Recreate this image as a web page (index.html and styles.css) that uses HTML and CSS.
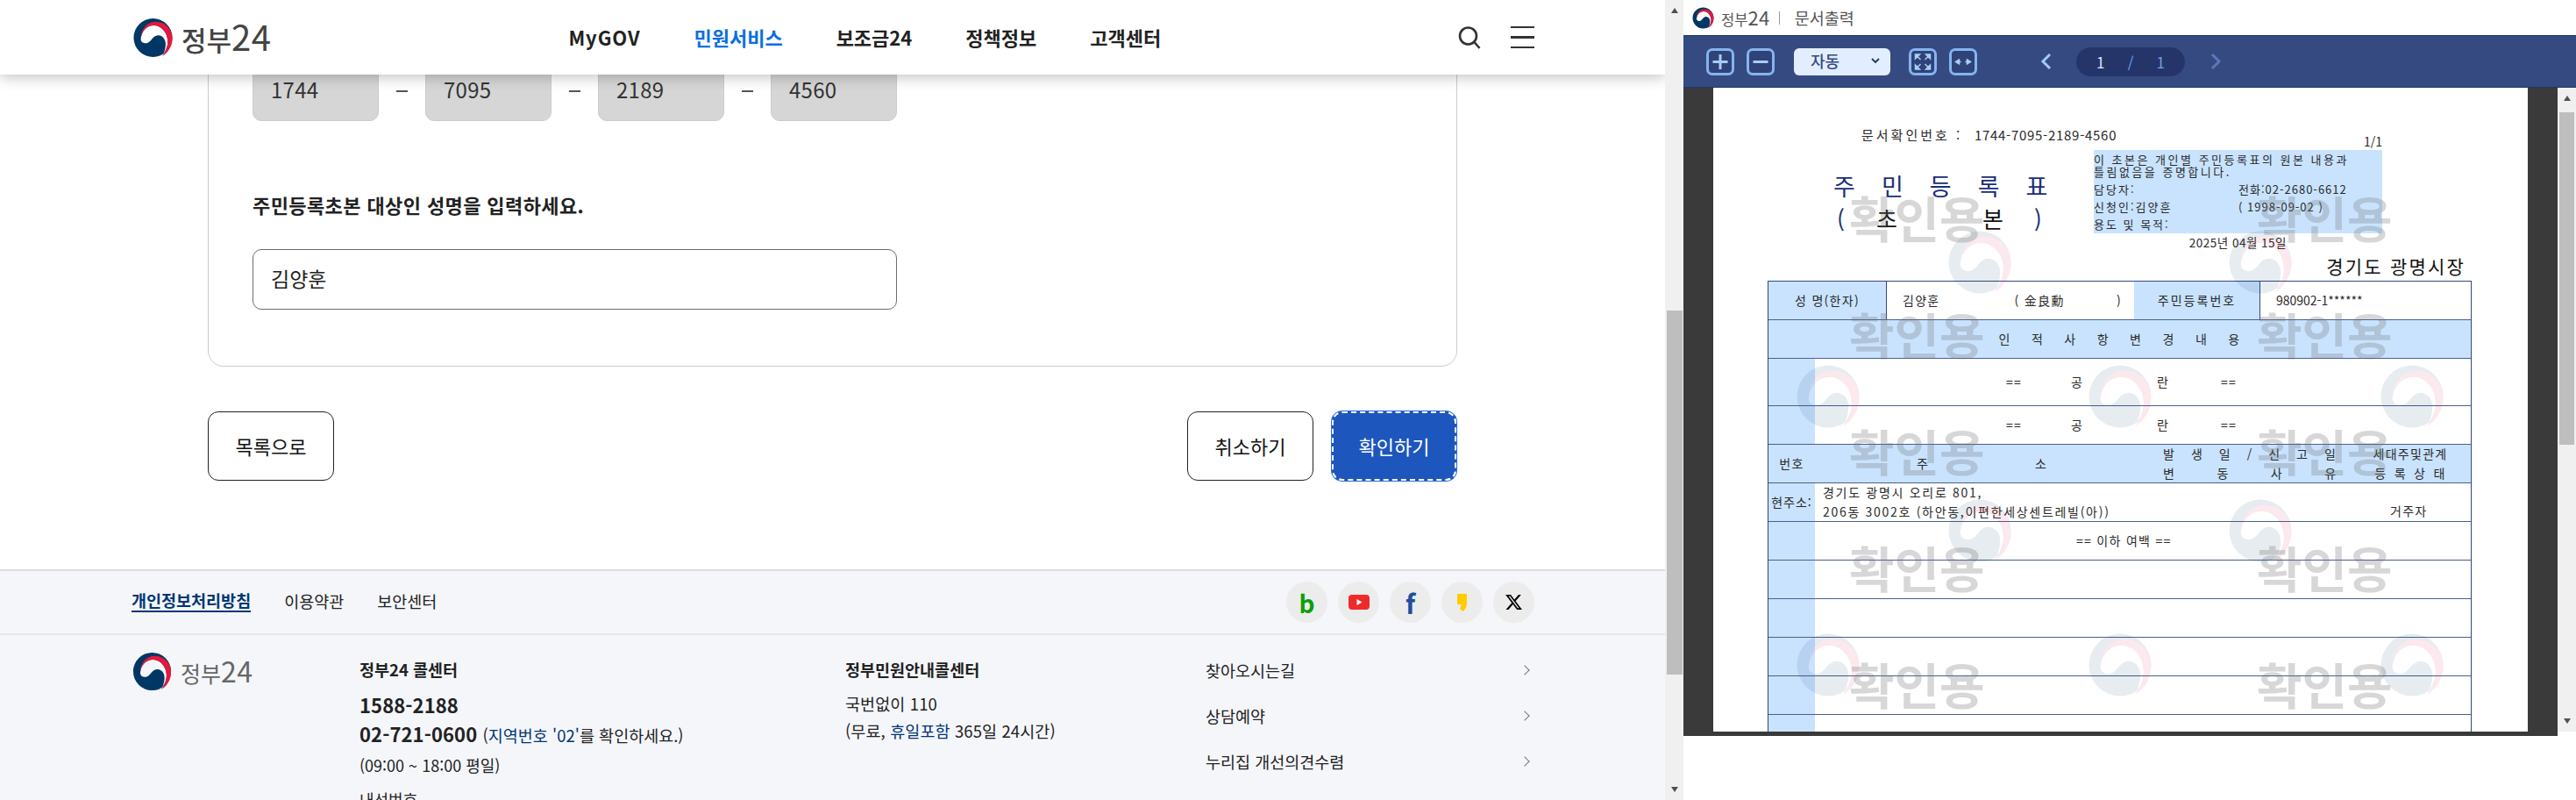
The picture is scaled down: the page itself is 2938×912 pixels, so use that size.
FILE: index.html

```html
<!DOCTYPE html>
<html lang="ko">
<head>
  <meta charset="UTF-8" />
  <title>정부24 문서출력</title>
  <link rel="stylesheet" href="styles.css">
</head>
<body>
  <svg class="defs" width="0" height="0">
    <symbol id="emblem" viewBox="0 0 48 48">
      <path fill="#003764" fill-rule="evenodd" d="M24 1a23 23 0 1 0 0 46a23 23 0 1 0 0-46ZM9.500 26C10 17 16 9.500 25 9.500C34 9.500 41.500 18 41.500 29C41.500 34 39.500 39 36.500 43C39 37 40 31 38 26.500C36 22 31 20 27 22C23 24 22 28 18 30C14 31.500 10 30 9.500 26Z"/>
      <path fill="#e5173f" d="M9.500 26C9 14 17 5 27 5C39 5 47 14 47 25C47 34 42 42 35 46C39 41 41.500 35 41.500 29C41.500 18 34 9.500 25 9.500C16 9.500 10 17 9.500 26Z"/>
    </symbol>
  </svg>

  <div class="main">
    <header class="site-head">
      <a class="brand">
        <svg class="brand-mark"><use href="#emblem"/></svg>
        <span class="brand-text">정부<span class="brand-num">24</span></span>
      </a>
      <nav class="gnb">
        <a class="latin">MyGOV</a>
        <a class="on">민원서비스</a>
        <a>보조금24</a>
        <a>정책정보</a>
        <a>고객센터</a>
      </nav>
      <div class="head-icons">
        <svg class="ico-search" viewBox="0 0 26 26"><circle cx="11.500" cy="11" r="9.500"/><path d="M18.500 18l6 7"/></svg>
        <div class="ico-menu"><i></i><i></i><i></i></div>
      </div>
    </header>

    <section class="card">
      <div class="num-row">
        <div class="field locked">1744</div>
        <span class="dash"></span>
        <div class="field locked">7095</div>
        <span class="dash"></span>
        <div class="field locked">2189</div>
        <span class="dash"></span>
        <div class="field locked">4560</div>
      </div>
      <p class="label">주민등록초본 대상인 성명을 입력하세요.</p>
      <div class="field name">김양훈</div>
    </section>

    <div class="actions">
      <a class="btn">목록으로</a>
      <div class="actions-right">
        <a class="btn">취소하기</a>
        <a class="btn primary">확인하기</a>
      </div>
    </div>

    <footer class="foot">
      <div class="foot-top">
        <div class="foot-links">
          <a class="strong">개인정보처리방침</a>
          <a>이용약관</a>
          <a>보안센터</a>
        </div>
        <div class="sns">
          <a class="sns-b">b</a>
          <a><svg class="sns-yt" viewBox="0 0 24 17"><rect width="24" height="17" rx="4" fill="#ee2b2b"/><path d="M9.500 5l6 3.500-6 3.500z" fill="#fff"/></svg></a>
          <a class="sns-f">f</a>
          <a><svg class="sns-ks" viewBox="0 0 11 20"><path d="M0 0h11v11c0 4-2 7-4.500 9L3 17l2-5H0z" fill="#ffcc00"/></svg></a>
          <a><svg class="sns-x" viewBox="0 0 24 24"><path d="M18.244 2.250h3.308l-7.227 8.260 8.502 11.240H16.170l-5.214-6.817L4.990 21.750H1.680l7.730-8.835L1.254 2.250H8.080l4.713 6.231zm-1.161 17.520h1.833L7.084 4.126H5.117z"/></svg></a>
        </div>
      </div>
      <div class="foot-body">
        <a class="brand small">
          <svg class="brand-mark"><use href="#emblem"/></svg>
          <span class="brand-text">정부<span class="brand-num">24</span></span>
        </a>
        <div class="foot-col">
          <h4>정부24 콜센터</h4>
          <p class="tel">1588-2188</p>
          <p class="tel second">02-721-0600 <span class="tel-note">(<em>지역번호 '02'</em>를 확인하세요.)</span></p>
          <p class="hours">(09:00 ~ 18:00 평일)</p>
          <p class="hours ext">내선번호</p>
        </div>
        <div class="foot-col">
          <h4>정부민원안내콜센터</h4>
          <p class="plain">국번없이 110</p>
          <p class="plain">(무료, <em>휴일포함</em> 365일 24시간)</p>
        </div>
        <ul class="foot-menu">
          <li>찾아오시는길<i></i></li>
          <li>상담예약<i></i></li>
          <li>누리집 개선의견수렴<i></i></li>
        </ul>
      </div>
    </footer>
  </div>

  <div class="sb">
    <span class="arr up"></span>
    <span class="thumb"></span>
    <span class="arr down"></span>
  </div>

  <div class="viewer">
    <div class="viewer-title">
      <a class="brand tiny">
        <svg class="brand-mark"><use href="#emblem"/></svg>
        <span class="brand-text">정부<span class="brand-num">24</span></span>
      </a>
      <span class="title-sep"></span>
      <span class="title-name">문서출력</span>
    </div>

    <div class="toolbar">
      <button class="tool"><svg viewBox="0 0 25 25"><path d="M12.500 4v17M4 12.500h17"/></svg></button>
      <button class="tool"><svg viewBox="0 0 25 25"><path d="M4 12.500h17"/></svg></button>
      <div class="zoom-select">자동<svg viewBox="0 0 10 7"><path d="M1 1l4 4 4-4"/></svg></div>
      <button class="tool"><svg class="thin" viewBox="0 0 25 25"><path d="M4 4h5L4 9zM21 4h-5l5 5zM4 21h5l-5-5zM21 21h-5l5-5zM6 6l4 4M19 6l-4 4M6 19l4-4M19 19l-4-4"/></svg></button>
      <button class="tool"><svg class="thin" viewBox="0 0 25 25"><path d="M8 10l-4 2.500 4 2.500zM17 10l4 2.500-4 2.500zM8 12.500h2M15 12.500h2"/></svg></button>
      <svg class="pager-arrow prev" viewBox="0 0 15 20"><path d="M12 2l-8 8 8 8"/></svg>
      <div class="pager"><span>1</span><span class="slash">/</span><span class="total">1</span></div>
      <svg class="pager-arrow next" viewBox="0 0 15 20"><path d="M3 2l8 8-8 8"/></svg>
    </div>

    <div class="doc-wrap">
      <div class="doc-dark">
        <div class="page">
          <div class="doc-head">
            <div class="doc-meta">
              <span class="doc-no"><b>문서확인번호 :</b>1744-7095-2189-4560</span>
              <span class="doc-count">1/1</span>
            </div>
            <div class="doc-title-row">
              <div class="doc-title">
                <div class="title-big">주 민 등 록 표</div>
                <div class="title-sub"><span>(</span><b>초</b><b>본</b><span>)</span></div>
              </div>
              <div class="cert">
                <p class="cert-lead">이 초본은 개인별 주민등록표의 원본 내용과<br>틀림없음을 증명합니다.</p>
                <p class="cert-line"><span>담당자:</span><span>전화:02-2680-6612</span></p>
                <p class="cert-line"><span>신청인:김양훈</span><span>( 1998-09-02 )</span></p>
                <p class="cert-line"><span>용도 및 목적:</span></p>
              </div>
            </div>
            <div class="doc-date">2025년 04월 15일</div>
            <div class="doc-issuer">경기도 광명시장</div>
          </div>

          <div class="dt">
            <div class="dr r-name">
              <div class="dc blue center">성 명(한자)</div>
              <div class="dc name-cell"><span>김양훈</span><span class="hanja">( 金良勳</span><span>)</span></div>
              <div class="dc blue center wide">주민등록번호</div>
              <div class="dc rrn">980902-1******</div>
            </div>
            <div class="dr blue-row center spaced">인 적 사 항 변 경 내 용</div>
            <div class="dr side tall">
              <div class="dc blue"></div>
              <div class="dc blank"><span>==</span><span>공</span><span>란</span><span>==</span></div>
            </div>
            <div class="dr side">
              <div class="dc blue"></div>
              <div class="dc blank"><span>==</span><span>공</span><span>란</span><span>==</span></div>
            </div>
            <div class="dr r-head blue-row">
              <div class="dc center">번호</div>
              <div class="dc addr-head"><span>주</span><span>소</span></div>
              <div class="dc stack"><span class="w1">발 생 일 / 신 고 일</span><span class="w2">변 동 사 유</span></div>
              <div class="dc stack center"><span>세대주및관계</span><span class="w3">등 록 상 태</span></div>
            </div>
            <div class="dr r-addr">
              <div class="dc blue center addr-tag">현주소:</div>
              <div class="dc addr"><span>경기도 광명시 오리로 801,</span><span>206동 3002호 (하안동,이편한세상센트레빌(아))</span></div>
              <div class="dc resident">거주자</div>
            </div>
            <div class="dr side">
              <div class="dc blue"></div>
              <div class="dc blank-end">== 이하 여백 ==</div>
            </div>
            <div class="dr side"><div class="dc blue"></div></div>
            <div class="dr side"><div class="dc blue"></div></div>
            <div class="dr side"><div class="dc blue"></div></div>
            <div class="dr side"><div class="dc blue"></div></div>
            <div class="dr side"><div class="dc blue"></div></div>
          </div>

          <div class="wm-marks">
            <div class="wm-row two"><svg><use href="#emblem"/></svg><svg><use href="#emblem"/></svg></div>
            <div class="wm-row three"><svg><use href="#emblem"/></svg><svg><use href="#emblem"/></svg><svg><use href="#emblem"/></svg></div>
            <div class="wm-row two"><svg><use href="#emblem"/></svg><svg><use href="#emblem"/></svg></div>
            <div class="wm-row three"><svg><use href="#emblem"/></svg><svg><use href="#emblem"/></svg><svg><use href="#emblem"/></svg></div>
          </div>
          <div class="wm-text">
            <span>확인용</span><span>확인용</span>
            <span>확인용</span><span>확인용</span>
            <span>확인용</span><span>확인용</span>
            <span>확인용</span><span>확인용</span>
            <span>확인용</span><span>확인용</span>
          </div>
        </div>
      </div>
      <div class="sb inner">
        <span class="arr up"></span>
        <span class="thumb"></span>
        <span class="arr down"></span>
      </div>
    </div>
  </div>
</body>
</html>
```

FILE: styles.css

```css
* {
  box-sizing: border-box;
}
html, body {
  margin: 0;
  height: 912px;
  overflow: hidden;
}
body {
  display: flex;
  width: 2938px;
  font-family: "Noto Sans CJK KR", "Noto Sans", sans-serif;
  color: #222;
  background: #fff;
}
p, h4, ul {
  margin: 0;
  padding: 0;
}
em {
  font-style: normal;
  color: #003675;
}
.defs {
  position: absolute;
}

/* left page */
.main {
  width: 1899px;
  height: 912px;
  overflow: hidden;
  flex: none;
}
.site-head {
  position: relative;
  z-index: 5;
  display: flex;
  align-items: center;
  height: 85px;
  padding: 0 149px 0 151px;
  background: #fff;
  box-shadow: 0 4px 14px rgba(0, 0, 0, 0.22);
}
.brand {
  display: flex;
  align-items: center;
  flex: none;
}
.brand-mark {
  width: 47px;
  height: 46px;
}
.brand-text {
  margin-left: 9px;
  font-size: 31px;
  font-weight: 500;
  line-height: 40px;
  color: #444;
}
.brand-num {
  font-size: 40px;
  font-weight: 400;
  letter-spacing: 0.5px;
}
.gnb {
  display: flex;
  gap: 61px;
  margin: -2px 0 0 339px;
  font-size: 22px;
  font-weight: 700;
  color: #222;
}
.gnb .latin {
  letter-spacing: 0.9px;
}
.gnb .on {
  color: #0b6fe0;
}
.head-icons {
  display: flex;
  align-items: center;
  gap: 34px;
  margin-left: auto;
}
.ico-search {
  width: 26px;
  height: 26px;
  fill: none;
  stroke: #333;
  stroke-width: 2.6;
}
.ico-menu {
  display: flex;
  flex-direction: column;
  gap: 9px;
  width: 27px;
}
.ico-menu i {
  display: block;
  height: 2.500px;
  background: #333;
}

.card {
  width: 1425px;
  height: 363px;
  margin: -30px 0 0 237px;
  padding: 13px 50px 0;
  border: 1px solid #ccc;
  border-radius: 18px;
}
.num-row {
  display: flex;
  align-items: center;
}
.field {
  display: flex;
  align-items: center;
  height: 69px;
  padding: 0 0 4px 20px;
  border-radius: 10px;
  font-size: 23px;
}
.locked {
  width: 144px;
  background: #d6d6d6;
  border: 1px solid #ccc;
  font-size: 24px;
  letter-spacing: 0.3px;
  color: #333;
}
.dash {
  width: 13px;
  height: 2px;
  margin: 0 20px;
  background: #555;
}
.label {
  margin-top: 79px;
  font-size: 22px;
  font-weight: 700;
  line-height: 32px;
  letter-spacing: 0.4px;
}
.name {
  width: 735px;
  margin-top: 35px;
  border: 1px solid #6e6e6e;
}

.actions {
  display: flex;
  justify-content: space-between;
  width: 1425px;
  margin: 51px 0 0 237px;
}
.actions-right {
  display: flex;
  gap: 21px;
  margin-right: 1px;
}
.btn {
  display: flex;
  align-items: center;
  justify-content: center;
  width: 144px;
  height: 79px;
  padding-bottom: 2px;
  border: 1.5px solid #222;
  border-radius: 12px;
  font-size: 22px;
  color: #111;
}
.primary {
  width: 142px;
  border: 2px dashed #fff;
  background: #1d56bc;
  color: #fff;
  box-shadow: 0 0 0 1px #2e6ad6;
}

.foot {
  margin-top: 101px;
  height: 263px;
  border-top: 2px solid #ddd;
  background: #f5f6fa;
}
.foot-top {
  display: flex;
  align-items: center;
  justify-content: space-between;
  height: 73px;
  padding: 0 149px 0 150px;
  border-bottom: 2px solid #e6e7eb;
}
.foot-links {
  display: flex;
  gap: 38px;
  margin-top: -3px;
  font-size: 18.500px;
  color: #222;
}
.foot-links .strong {
  font-weight: 700;
  color: #003675;
  border-bottom: 2px solid #003675;
  line-height: 24px;
}
.sns {
  display: flex;
  gap: 12px;
}
.sns a {
  display: flex;
  align-items: center;
  justify-content: center;
  width: 47px;
  height: 47px;
  border-radius: 50%;
  background: #ececec;
  font-weight: 700;
  line-height: 1;
}
.sns-b {
  font-size: 28px;
  color: #0aa00a;
}
.sns-f {
  font-size: 30px;
  font-weight: 500;
  color: #1c4fa0;
}
.sns-yt {
  width: 24px;
  height: 17px;
}
.sns-ks {
  width: 11px;
  height: 20px;
}
.sns-x {
  width: 21px;
  height: 21px;
}

.foot-body {
  display: grid;
  grid-template-columns: 260px 554px 411px 375px;
  padding: 19px 0 0 150px;
}
.brand.small .brand-mark {
  width: 47px;
  height: 45px;
}
.brand.small {
  align-self: start;
}
.brand.small .brand-text {
  font-size: 25px;
  color: #666;
  font-weight: 400;
  line-height: 30px;
}
.brand.small .brand-num {
  font-size: 32px;
}
.foot-col h4 {
  font-size: 18.500px;
  font-weight: 700;
  line-height: 26px;
  margin-top: 7px;
}
.tel {
  font-size: 22px;
  font-weight: 700;
  line-height: 30px;
  margin-top: 12px;
  letter-spacing: 0.1px;
}
.tel.second {
  margin-top: 3px;
}
.tel-note {
  font-size: 18.500px;
  font-weight: 400;
  letter-spacing: 0;
}
.hours {
  font-size: 18px;
  line-height: 26px;
  margin-top: 6px;
}
.hours.ext {
  margin-top: 13px;
}
.plain {
  font-size: 18.500px;
  line-height: 26px;
  margin-top: 13px;
  letter-spacing: 0.1px;
}
.plain + .plain {
  margin-top: 5px;
}
.foot-menu {
  list-style: none;
  margin-top: 8px;
}
.foot-menu li {
  display: flex;
  align-items: center;
  justify-content: space-between;
  height: 26px;
  margin-bottom: 26px;
  font-size: 18.500px;
}
.foot-menu i {
  width: 8px;
  height: 8px;
  margin-right: 7px;
  border-top: 1px solid #777;
  border-right: 1px solid #777;
  transform: rotate(45deg);
}

/* scrollbars */
.sb {
  flex: none;
  display: flex;
  flex-direction: column;
  align-items: center;
  width: 21px;
  height: 912px;
  background: #f0f0f0;
}
.arr {
  width: 0;
  height: 0;
  border-left: 4px solid transparent;
  border-right: 4px solid transparent;
}
.arr.up {
  margin-top: 9px;
  border-bottom: 6px solid #505050;
}
.arr.down {
  margin-top: 128px;
  border-top: 6px solid #505050;
}
.thumb {
  width: 18px;
  height: 415px;
  margin-top: 339px;
  background: #bebebe;
}
.sb.inner {
  height: 734px;
}
.sb.inner .thumb {
  width: 17px;
  height: 379px;
  margin-top: 13px;
}
.sb.inner .arr.down {
  margin-top: 312px;
}

/* right viewer */
.viewer {
  width: 1018px;
  flex: none;
}
.viewer-title {
  display: flex;
  align-items: center;
  height: 40px;
  padding-left: 10px;
  color: #555;
}
.brand.tiny .brand-mark {
  width: 25px;
  height: 25px;
}
.brand.tiny .brand-text {
  margin-left: 8px;
  font-size: 16.500px;
  font-weight: 400;
  line-height: 22px;
  color: #555;
}
.brand.tiny .brand-num {
  font-size: 22px;
}
.title-sep {
  width: 1px;
  height: 15px;
  margin: 0 17px 0 10px;
  background: #999;
}
.title-name {
  font-size: 18.500px;
  line-height: 24px;
}
.toolbar {
  display: flex;
  align-items: center;
  height: 60px;
  padding-left: 26px;
  background: #364a82;
  border-top: 1px solid #1f3564;
  border-bottom: 1px solid #1f3564;
}
.tool {
  width: 32px;
  height: 31px;
  margin: 0 14px 0 0;
  padding: 0;
  background: #2f4378;
  border: 3px solid #86b4ee;
  border-radius: 7px;
}
.tool svg {
  display: block;
  width: 100%;
  height: 100%;
  fill: none;
  stroke: #a9cdf6;
  stroke-width: 3;
}
.tool svg.thin {
  fill: #a9cdf6;
  stroke-width: 1.500;
}
.zoom-select {
  display: flex;
  align-items: center;
  justify-content: space-between;
  width: 110px;
  height: 31px;
  margin: 0 21px 0 8px;
  padding: 0 12px 2px 19px;
  background: #e2eeff;
  border-radius: 6px;
  font-size: 18px;
  font-weight: 500;
  color: #364a82;
}
.zoom-select svg {
  width: 10px;
  height: 7px;
  fill: none;
  stroke: #203765;
  stroke-width: 1.800;
}
.pager-arrow {
  width: 15px;
  height: 20px;
  fill: none;
  stroke-width: 3;
}
.prev {
  stroke: #a5c9f5;
  margin-left: 57px;
}
.next {
  stroke: #5a79b8;
  margin-left: 28px;
}
.pager {
  display: flex;
  align-items: center;
  justify-content: space-between;
  width: 124px;
  height: 33px;
  margin-left: 27px;
  padding: 0 23px;
  background: #25356a;
  border-radius: 17px;
  font-size: 17px;
  color: #d6e6ff;
}
.pager .slash, .pager .total {
  color: #6f9fe6;
}
.doc-wrap {
  display: flex;
  align-items: flex-start;
}
.doc-dark {
  width: 997px;
  height: 739px;
  padding: 0 34px;
  background: #3a3a3a;
}

/* document page */
.page {
  position: relative;
  width: 929px;
  height: 734px;
  overflow: hidden;
  background: #fff;
  color: #2a2a2a;
  font-size: 14px;
  line-height: 1.2;
}
.doc-head {
  height: 220px;
  padding: 44px 0 0 62px;
}
.doc-meta {
  display: flex;
  align-items: flex-end;
  justify-content: space-between;
  width: 701px;
  height: 27px;
  padding-left: 107px;
}
.doc-no {
  font-size: 15px;
  line-height: 20px;
  align-self: flex-start;
  letter-spacing: 0.7px;
}
.doc-no b {
  display: inline-block;
  width: 129px;
  font-weight: 400;
  letter-spacing: 3px;
}
.doc-count {
  font-size: 14px;
  line-height: 20px;
}
.doc-title-row {
  display: flex;
  width: 701px;
  height: 95px;
  padding-left: 75px;
}
.doc-title {
  width: 297px;
  padding-top: 22px;
}
.title-big {
  font-size: 27px;
  line-height: 38px;
  color: #1a2d78;
  word-spacing: 22.500px;
}
.title-sub {
  display: grid;
  grid-template-columns: 45px 121px 59px auto;
  padding-left: 4px;
  font-size: 26px;
  line-height: 36px;
  color: #1a2d78;
}
.title-sub b {
  font-weight: 400;
  color: #111;
}
.cert {
  width: 329px;
  padding-top: 4px;
  background: #c9e3ff;
  font-size: 13px;
  line-height: 14px;
}
.cert-lead {
  letter-spacing: 2.500px;
}
.cert-line {
  display: flex;
  margin-top: 6px;
  letter-spacing: 1px;
}
.cert-line span:first-child {
  width: 165px;
  letter-spacing: 2px;
}
.doc-date {
  width: 592px;
  text-align: right;
  font-size: 13.500px;
  line-height: 20px;
  letter-spacing: 0.5px;
}
.doc-issuer {
  width: 796px;
  margin-top: 2px;
  text-align: right;
  font-size: 21px;
  line-height: 30px;
  letter-spacing: 2.200px;
  color: #111;
}

.dt {
  width: 803px;
  margin-left: 62px;
  border-left: 1.500px solid #33477f;
  border-right: 1.500px solid #33477f;
  border-top: 1.500px solid #33477f;
}
.dr {
  display: flex;
  height: 44px;
  border-bottom: 1.500px solid #4a5e92;
  letter-spacing: 1.300px;
}
.dr.tall {
  height: 54px;
}
.dc {
  height: 100%;
}
.center {
  display: flex;
  align-items: center;
  justify-content: center;
}
.blue, .blue-row {
  background: #c9e3ff;
}
.r-name .dc:nth-child(1) {
  width: 135px;
  border-right: 1.500px solid #33477f;
}
.name-cell {
  display: flex;
  align-items: center;
  width: 282px;
  padding-left: 18px;
}
.hanja {
  margin: 0 auto 0 85px;
}
.name-cell span:last-child {
  margin-right: 14px;
}
.r-name .dc:nth-child(3) {
  width: 144px;
  border-right: 1.500px solid #33477f;
}
.wide {
  letter-spacing: 2px;
}
.rrn {
  display: flex;
  align-items: center;
  padding-left: 18px;
  letter-spacing: 0;
}
.spaced {
  word-spacing: 18px;
  display: flex;
}
.side .dc:first-child, .r-addr .dc:first-child, .r-head .dc:first-child {
  flex: none;
  width: 53px;
}
.blank {
  display: grid;
  grid-template-columns: 74px 98px 73px auto;
  align-items: center;
  padding-left: 218px;
  width: 100%;
}
.addr-head {
  display: grid;
  grid-template-columns: 135px auto;
  align-items: center;
  flex: none;
  width: 397px;
  padding-left: 116px;
}
.stack {
  display: flex;
  flex-direction: column;
  justify-content: space-around;
  flex: none;
  width: 237px;
}
.stack.center {
  align-items: center;
  flex: 1;
  width: auto;
  padding-right: 24px;
}
.w1 {
  word-spacing: 12.500px;
}
.w2 {
  word-spacing: 42px;
}
.w3 {
  word-spacing: 3px;
}
.addr-tag {
  letter-spacing: 1px;
}
.addr {
  display: flex;
  flex-direction: column;
  justify-content: space-around;
  flex: none;
  width: 656px;
  padding-left: 9px;
  letter-spacing: 1.700px;
}
.resident {
  display: flex;
  align-items: flex-end;
  padding-bottom: 3px;
}
.blank-end {
  display: flex;
  align-items: center;
  padding-left: 298px;
}

/* watermark overlays */
.wm-marks {
  position: absolute;
  top: 162px;
  left: 93px;
  width: 742px;
  opacity: 0.09;
}
.wm-row {
  display: flex;
  height: 153px;
  padding: 0 173px;
  justify-content: space-between;
}
.wm-row.three {
  padding: 0;
}
.wm-row svg {
  width: 76px;
  height: 74px;
}
.wm-text {
  position: absolute;
  top: 120px;
  left: 155px;
  display: grid;
  grid-template-columns: 465px 156px;
  grid-auto-rows: 133px;
  font-size: 56px;
  font-weight: 700;
  line-height: 53px;
  color: rgba(110, 110, 110, 0.28);
}
```
